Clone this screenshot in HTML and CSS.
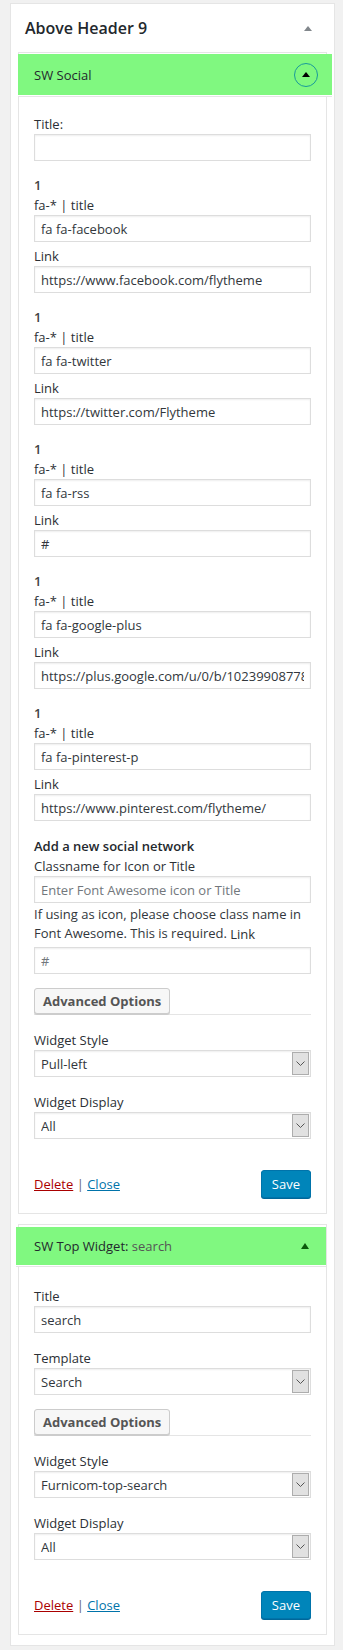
FILE: index.html
```html
<!DOCTYPE html>
<html>
<head>
  <title>Widgets - Above Header 9</title>
  <link rel="stylesheet" href="styles.css">
</head>
<body>
  <div class="sidebar">
    <div class="sidebar-head">
      <h2>Above Header 9</h2>
      <span class="tri tri-gray"></span>
    </div>

    <div class="widget">
      <div class="widget-top top-social">
        <h3>SW Social</h3>
        <span class="toggle"><span class="tri tri-black"></span></span>
      </div>
      <div class="widget-inside">
        <div class="field first">
          <label>Title:</label>
          <input type="text" value="">
        </div>

        <div class="net">
          <div class="num">1</div>
          <label>fa-* | title</label>
          <input type="text" value="fa fa-facebook">
          <label class="sub">Link</label>
          <input type="text" value="https://www.facebook.com/flytheme">
        </div>
        <div class="net">
          <div class="num">1</div>
          <label>fa-* | title</label>
          <input type="text" value="fa fa-twitter">
          <label class="sub">Link</label>
          <input type="text" value="https://twitter.com/Flytheme">
        </div>
        <div class="net">
          <div class="num">1</div>
          <label>fa-* | title</label>
          <input type="text" value="fa fa-rss">
          <label class="sub">Link</label>
          <input type="text" value="#">
        </div>
        <div class="net">
          <div class="num">1</div>
          <label>fa-* | title</label>
          <input type="text" value="fa fa-google-plus">
          <label class="sub">Link</label>
          <input type="text" value="https://plus.google.com/u/0/b/102399087783654216770">
        </div>
        <div class="net">
          <div class="num">1</div>
          <label>fa-* | title</label>
          <input type="text" value="fa fa-pinterest-p">
          <label class="sub">Link</label>
          <input type="text" value="https://www.pinterest.com/flytheme/">
        </div>

        <div class="new-net">
          <h4>Add a new social network</h4>
          <label>Classname for Icon or Title</label>
          <input type="text" placeholder="Enter Font Awesome icon or Title">
          <p class="desc">
            <span class="line">If using as icon, please choose class name in</span>
            <span class="line">Font Awesome. This is required. <label class="inline">Link</label></span>
          </p>
          <input type="text" placeholder="#">
        </div>

        <div class="adv"><button type="button" class="btn">Advanced Options</button></div>

        <div class="field">
          <label>Widget Style</label>
          <div class="select">
            <select><option>Pull-left</option></select>
            <span class="arrow"><svg width="9" height="5" viewBox="0 0 9 5"><path d="M0.5 0.5 L4.5 4.5 L8.5 0.5" fill="none" stroke="#555" stroke-width="1"/></svg></span>
          </div>
        </div>
        <div class="field">
          <label>Widget Display</label>
          <div class="select">
            <select><option>All</option></select>
            <span class="arrow"><svg width="9" height="5" viewBox="0 0 9 5"><path d="M0.5 0.5 L4.5 4.5 L8.5 0.5" fill="none" stroke="#555" stroke-width="1"/></svg></span>
          </div>
        </div>

        <div class="actions">
          <div class="links"><a href="#" class="del">Delete</a> | <a href="#" class="close">Close</a></div>
          <button type="button" class="save">Save</button>
        </div>
      </div>
    </div>

    <div class="widget">
      <div class="widget-top top-search">
        <h3>SW Top Widget:<span class="in-title"> search</span></h3>
        <span class="tri tri-green"></span>
      </div>
      <div class="widget-inside">
        <div class="field first">
          <label>Title</label>
          <input type="text" value="search">
        </div>
        <div class="field">
          <label>Template</label>
          <div class="select">
            <select><option>Search</option></select>
            <span class="arrow"><svg width="9" height="5" viewBox="0 0 9 5"><path d="M0.5 0.5 L4.5 4.5 L8.5 0.5" fill="none" stroke="#555" stroke-width="1"/></svg></span>
          </div>
        </div>

        <div class="adv"><button type="button" class="btn">Advanced Options</button></div>

        <div class="field">
          <label>Widget Style</label>
          <div class="select">
            <select><option>Furnicom-top-search</option></select>
            <span class="arrow"><svg width="9" height="5" viewBox="0 0 9 5"><path d="M0.5 0.5 L4.5 4.5 L8.5 0.5" fill="none" stroke="#555" stroke-width="1"/></svg></span>
          </div>
        </div>
        <div class="field">
          <label>Widget Display</label>
          <div class="select">
            <select><option>All</option></select>
            <span class="arrow"><svg width="9" height="5" viewBox="0 0 9 5"><path d="M0.5 0.5 L4.5 4.5 L8.5 0.5" fill="none" stroke="#555" stroke-width="1"/></svg></span>
          </div>
        </div>

        <div class="actions">
          <div class="links"><a href="#" class="del">Delete</a> | <a href="#" class="close">Close</a></div>
          <button type="button" class="save">Save</button>
        </div>
      </div>
    </div>
  </div>
</body>
</html>
```

FILE: styles.css
```css
body {
  margin: 0;
  padding: 3px 8px 0 10px;
  background: #f1f1f1;
  font-family: "Open Sans", "Noto Sans", sans-serif;
  font-size: 13px;
  color: #32373c;
}
.sidebar {
  background: #fff;
  border: 1px solid #e5e5e5;
  padding: 0 7px 10px 7px;
}
.sidebar-head {
  display: flex;
  align-items: center;
  justify-content: space-between;
  height: 48px;
  padding: 0 15px 0 7px;
}
.sidebar-head h2 {
  margin: 0;
  font-size: 16px;
  font-weight: 600;
  color: #23282d;
}
.tri {
  width: 0;
  height: 0;
  border-left: 4px solid transparent;
  border-right: 4px solid transparent;
}
.tri-gray {
  border-bottom: 5px solid #82878c;
}
.tri-black {
  border-bottom: 5px solid #000;
}
.tri-green {
  border-bottom: 6px solid #0b5a0b;
}
.widget {
  border: 1px solid #e5e5e5;
  margin-bottom: 10px;
}
.widget:last-child {
  margin-bottom: 0;
}
.widget-top {
  display: flex;
  align-items: center;
  justify-content: space-between;
  background: #80f880;
  border-bottom: 1px solid #fff;
  box-shadow: 0 1px 0 #e5e5e5;
}
.top-social {
  height: 41px;
  margin: 1px -6px 1px -1px;
  padding: 0 14px 0 16px;
}
.top-search {
  height: 38px;
  margin: 2px 0 3px -3px;
  padding: 0 17px 0 18px;
}
.widget-top h3 {
  margin: 0;
  font-size: 13px;
  font-weight: 400;
  color: #23282d;
}
.in-title {
  color: #555;
}
.toggle {
  width: 22px;
  height: 22px;
  border: 1px solid #1a9a9a;
  border-radius: 50%;
  display: flex;
  align-items: center;
  justify-content: center;
}
.widget-inside {
  padding: 18px 15px 15px 15px;
}
label {
  display: block;
  line-height: 19px;
  color: #2c3035;
}
input[type=text] {
  display: block;
  box-sizing: border-box;
  width: 100%;
  height: 27px;
  margin: 0;
  padding: 0 6px;
  border: 1px solid #ddd;
  box-shadow: inset 0 1px 2px rgba(0, 0, 0, 0.07);
  font-family: inherit;
  font-size: 13px;
  color: #32373c;
  background: #fff;
}
input::placeholder {
  color: #72777c;
}
.field {
  margin-top: 16px;
}
.field.first {
  margin-top: 0;
}
.net {
  margin-top: 14px;
}
.num {
  line-height: 21px;
  font-weight: 600;
  color: #444;
}
.sub {
  margin-top: 5px;
}
.new-net {
  margin-top: 14px;
}
.new-net h4 {
  margin: 0;
  font-size: 13px;
  font-weight: 600;
  line-height: 22px;
  color: #23282d;
}
.desc {
  margin: 2px 0 3px 0;
  line-height: 19px;
}
.desc .line {
  display: block;
}
label.inline {
  display: inline;
  vertical-align: -1px;
}
.adv {
  margin-top: 14px;
  border-bottom: 1px solid #e5e5e5;
}
.btn {
  display: block;
  height: 26px;
  padding: 0 8px;
  border: 1px solid #ccc;
  border-radius: 3px;
  background: #f7f7f7;
  box-shadow: 0 1px 0 #ccc;
  font-family: inherit;
  font-size: 13px;
  font-weight: 700;
  color: #555;
}
.select {
  display: flex;
  height: 27px;
  box-sizing: border-box;
  border: 1px solid #ddd;
  box-shadow: inset 0 1px 2px rgba(0, 0, 0, 0.07);
  background: #fff;
}
.select select {
  flex: 1;
  appearance: none;
  -webkit-appearance: none;
  border: 0;
  background: transparent;
  padding: 0 6px;
  font-family: inherit;
  font-size: 13px;
  color: #32373c;
}
.arrow {
  width: 15px;
  margin: 1px 1px 1px 0;
  border: 1px solid #adadad;
  background: #e1e1e1;
  display: flex;
  align-items: center;
  justify-content: center;
}
.actions {
  margin-top: 31px;
  display: flex;
  align-items: center;
  justify-content: space-between;
}
.links {
  color: #666;
}
.links a {
  text-decoration: underline;
}
.del {
  color: #a00;
}
.close {
  color: #0073aa;
}
.save {
  height: 28px;
  padding: 0 10px;
  border: 1px solid #0073aa;
  border-radius: 3px;
  background: #0085ba;
  box-shadow: 0 1px 0 #006799;
  color: #fff;
  font-family: inherit;
  font-size: 13px;
}
```
